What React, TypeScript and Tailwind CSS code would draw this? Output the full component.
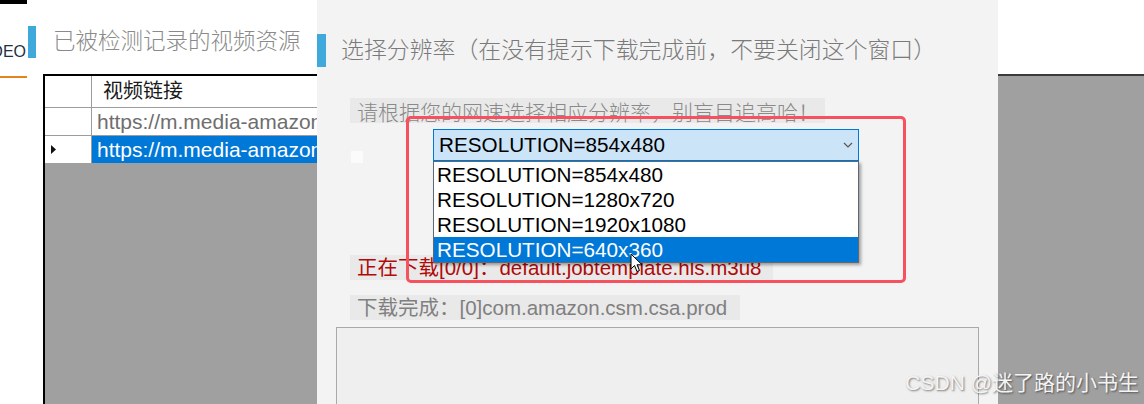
import React from "react";

const options = [
  "RESOLUTION=854x480",
  "RESOLUTION=1280x720",
  "RESOLUTION=1920x1080",
  "RESOLUTION=640x360",
];

// full-width punctuation kept at one em, as the original font draws it
const Punct: React.FC<{ c: string; right?: boolean }> = ({ c, right }) => (
  <span className={`inline-block w-[1em] ${right ? "text-right" : "text-left"}`}>{c}</span>
);

const Cursor = () => (
  <svg width="14" height="21" viewBox="0 0 14 21" className="absolute left-[313px] top-[253px] z-30">
    <path
      d="M1 1 L1 16 L4.5 12.5 L7 18.5 L9.5 17.5 L7 11.8 L12 11.8 Z"
      fill="#fff"
      stroke="#000"
      strokeWidth="1"
      strokeLinejoin="round"
    />
  </svg>
);

const App: React.FC = () => {
  return (
    <div
      lang="zh-CN"
      className="relative flex h-[404px] w-[1144px] overflow-hidden bg-white font-['Liberation_Sans','Noto_Sans_CJK_SC',sans-serif]"
    >
      {/* Background window, left part */}
      <div className="flex h-full w-[317px] shrink-0 overflow-hidden bg-white">
        <div className="w-[28px] shrink-0">
          <div className="h-[4px] w-[27px] bg-black" />
          <div className="mt-[38px] flex h-[20px] w-[26px] justify-end overflow-hidden">
            <span className="whitespace-nowrap text-[16px] leading-[20px] text-[#1d3140]">VIDEO</span>
          </div>
          <div className="mt-[14px] h-[2px] w-[27px] bg-[#e8821e]" />
        </div>
        <div className="flex min-w-0 flex-1 flex-col">
          <div className="mt-[26px] flex h-[32px] shrink-0 items-center">
            <div className="h-[32px] w-[8px] bg-[#3fa9dc]" />
            <span className="ml-[17px] whitespace-nowrap text-[22.5px] font-light text-[#8a8a8a]">
              已被检测记录的视频资源
            </span>
          </div>
          <div className="ml-[15px] mt-[16px] flex min-w-0 flex-1 flex-col border-l-2 border-t-2 border-black">
            <div className="flex h-[32px] shrink-0 border-b border-[#9c9c9c] bg-white">
              <div className="w-[47px] shrink-0 border-r border-[#9c9c9c]" />
              <span className="whitespace-nowrap pl-[11px] text-[20px] leading-[31px] text-[#1a1a1a]">视频链接</span>
            </div>
            <div className="flex h-[28px] shrink-0 border-b border-[#9c9c9c] bg-white">
              <div className="w-[47px] shrink-0 border-r border-[#9c9c9c]" />
              <span className="whitespace-nowrap pl-[5px] text-[21px] leading-[27px] text-[#6e6e6e]">
                https://m.media-amazon.com/images/S/vse-vms
              </span>
            </div>
            <div className="flex h-[27px] shrink-0 bg-white">
              <div className="flex w-[47px] shrink-0 items-center border-r border-[#9c9c9c] pl-[6px]">
                <svg width="5" height="9" viewBox="0 0 5 9">
                  <path d="M0 0 L5 4.5 L0 9 Z" fill="#111" />
                </svg>
              </div>
              <span className="flex-1 whitespace-nowrap bg-[#0078d7] pl-[5px] text-[21px] leading-[27px] text-white">
                https://m.media-amazon.com/images/S/vse-vms
              </span>
            </div>
            <div className="flex-1 bg-[#a0a0a0]" />
          </div>
        </div>
      </div>

      {/* Dialog */}
      <div className="relative flex h-full w-[681px] shrink-0 flex-col overflow-hidden bg-[#f3f3f3]">
        <div className="mt-[34px] flex h-[33px] shrink-0 items-center">
          <div className="h-[33px] w-[9px] bg-[#3fa9dc]" />
          <span className="ml-[15px] whitespace-nowrap text-[22.9px] font-light text-[#7a7a7a]">
            选择分辨率<Punct c="（" right />在没有提示下载完成前<Punct c="，" />不要关闭这个窗口<Punct c="）" />
          </span>
        </div>

        <div className="ml-[33px] mt-[31px] h-[25px] w-[475px] shrink-0 overflow-hidden bg-[#e9e9e9]">
          <span className="block whitespace-nowrap pl-[7px] pt-[2px] text-[21px] font-light leading-[25px] text-[#8a8a8a]">
            请根据您的网速选择相应分辨率<Punct c="，" />别盲目追高哈<Punct c="！" />
          </span>
        </div>

        <div className="mt-[6px] flex h-[32px] shrink-0 items-start">
          <div className="ml-[34px] mt-[22px] h-[12px] w-[12px] bg-[#fbfbfb]" />
          <div className="relative ml-[70px]">
            <div className="flex h-[32px] w-[426px] items-center justify-between border border-[#0078d7] bg-[#cce4f7] pl-[5px] pr-[5px]">
              <span className="text-[20.7px] leading-[30px] text-black">RESOLUTION=854x480</span>
              <svg width="10" height="6" viewBox="0 0 10 6">
                <path d="M1 1 L5 5 L9 1" fill="none" stroke="#555" strokeWidth="1.2" />
              </svg>
            </div>
            <div className="absolute left-0 top-[32px] z-10 w-[426px] border border-[#5d6a76] bg-white shadow-[2px_2px_3px_rgba(0,0,0,0.35)]">
              {options.map((o, i) => (
                <div
                  key={o}
                  className={`h-[25px] pl-[3px] text-[20.7px] leading-[25px] ${
                    i === options.length - 1 ? "bg-[#0078d7] text-white" : "text-black"
                  }`}
                >
                  {o}
                </div>
              ))}
            </div>
          </div>
        </div>

        <div className="ml-[33px] mt-[94px] h-[25px] w-[423px] shrink-0 overflow-hidden bg-[#e9e9e9]">
          <span className="block whitespace-nowrap pl-[7px] text-[20.5px] leading-[25px] text-[#b00a0a]">
            正在下载[0/0]：default.jobtemplate.hls.m3u8
          </span>
        </div>

        <div className="ml-[33px] mt-[15px] h-[25px] w-[390px] shrink-0 overflow-hidden bg-[#e9e9e9]">
          <span className="block whitespace-nowrap pl-[7px] text-[20.5px] leading-[25px] text-[#808080]">
            下载完成：[0]com.amazon.csm.csa.prod
          </span>
        </div>

        <div className="ml-[19px] mt-[7px] h-[100px] w-[643px] shrink-0 border border-[#a9a9a9] bg-[#efefef]" />

        {/* highlight */}
        <div className="pointer-events-none absolute left-[89px] top-[116px] z-20 h-[167px] w-[500px] rounded-[5px] border-[3.5px] border-[#f7505f]" />
        <Cursor />
      </div>

      {/* Background window, right part */}
      <div className="flex h-full flex-1 flex-col bg-white">
        <div className="mt-[74px] h-[2px] shrink-0 bg-[#3a3a3a]" />
        <div className="flex-1 bg-[#a0a0a0]" />
      </div>

      <div className="absolute right-[5px] top-[370px] whitespace-nowrap text-[21px] leading-[26px] text-[#f4f4f4] [text-shadow:1px_1px_2px_rgba(0,0,0,0.5)]">
        CSDN @迷了路的小书生
      </div>
    </div>
  );
};

export default App;
